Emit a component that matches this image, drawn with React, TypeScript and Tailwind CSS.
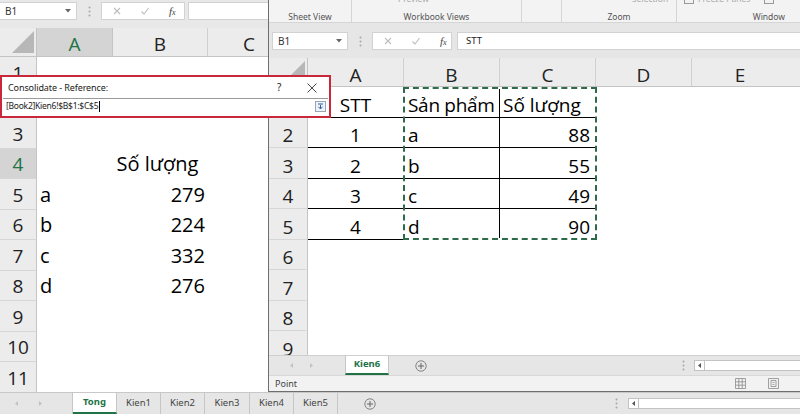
import React from "react";

function Dots() {
  return (
    <svg width="3" height="11" viewBox="0 0 3 11">
      <circle cx="1.5" cy="1.5" r="1" fill="#a8a8a8" />
      <circle cx="1.5" cy="5.5" r="1" fill="#a8a8a8" />
      <circle cx="1.5" cy="9.5" r="1" fill="#a8a8a8" />
    </svg>
  );
}

function DropTri() {
  return (
    <svg width="6" height="4" viewBox="0 0 6 4">
      <path d="M0 0 H6 L3 3.5 Z" fill="#666" />
    </svg>
  );
}

function NameBox({ className }: { className: string }) {
  return (
    <div
      className={`${className} h-[18px] bg-white border border-[#d2d2d2] flex items-center justify-between pl-[5px] pr-[5px] text-[10px] text-[#333] font-['Noto_Sans',sans-serif]`}
    >
      <span>B1</span>
      <DropTri />
    </div>
  );
}

function FxBox({ className }: { className: string }) {
  return (
    <div className={`${className} h-[18px] bg-white border border-[#d2d2d2] flex items-center pl-[11px] gap-[20px]`}>
      <svg width="8" height="8" viewBox="0 0 8 8">
        <path d="M1 1 L7 7 M7 1 L1 7" stroke="#bdbdbd" strokeWidth="1.1" />
      </svg>
      <svg width="8" height="8" viewBox="0 0 8 8">
        <path d="M0.5 4.5 L3 7 L7.5 1" stroke="#bdbdbd" strokeWidth="1.1" fill="none" />
      </svg>
      <span className="font-['Liberation_Serif',serif] italic text-[11px] leading-none text-[#444]">
        f<span className="text-[8px]">x</span>
      </span>
    </div>
  );
}

function CornerTri({ w }: { w: number }) {
  return (
    <svg width={w} height="28" viewBox={`0 0 ${w} 28`}>
      <path d={`M${w - 3} 3 L${w - 3} 25 L${w - 25} 25 Z`} fill="#b7b7b7" />
    </svg>
  );
}

function Arrows() {
  return (
    <>
      <svg width="3" height="5" viewBox="0 0 3 5">
        <path d="M3 0 V5 L0 2.5 Z" fill="#c2c2c2" />
      </svg>
      <svg width="3" height="5" viewBox="0 0 3 5">
        <path d="M0 0 V5 L3 2.5 Z" fill="#c2c2c2" />
      </svg>
    </>
  );
}

function PlusCircle() {
  return (
    <svg width="12" height="12" viewBox="0 0 12 12">
      <circle cx="6" cy="6" r="5.2" stroke="#777" strokeWidth="0.9" fill="none" />
      <path d="M6 3 V9 M3 6 H9" stroke="#666" strokeWidth="1" />
    </svg>
  );
}

function ScrollBox({ className }: { className: string }) {
  return (
    <div className={`${className} h-[11px] bg-white border border-[#c3c3c3] flex`}>
      <div className="w-[10px] h-full border-r border-[#c3c3c3] flex items-center justify-center">
        <svg width="3" height="5" viewBox="0 0 3 5">
          <path d="M3 0 V5 L0 2.5 Z" fill="#555" />
        </svg>
      </div>
    </div>
  );
}

const leftRows: { a?: string; b?: string; bCenter?: boolean }[] = [
  {},
  {},
  {},
  { b: "Số lượng", bCenter: true },
  { a: "a", b: "279" },
  { a: "b", b: "224" },
  { a: "c", b: "332" },
  { a: "d", b: "276" },
  {},
  {},
  {},
];

function LeftWindow() {
  return (
    <div className="w-[268px] h-[392px] shrink-0 flex flex-col overflow-hidden bg-white">
      <div className="h-[28px] shrink-0 bg-[#e8e8e8] pt-[2px]">
        <div className="flex items-center h-[18px]">
          <NameBox className="w-[77px] border-l-0" />
          <div className="w-[24px] flex justify-center">
            <Dots />
          </div>
          <FxBox className="w-[84px]" />
          <div className="ml-[3px] flex-1 h-[18px] bg-white border border-r-0 border-[#d2d2d2]" />
        </div>
      </div>
      <div className="h-[29px] shrink-0 flex bg-[#ececec] border-b border-[#c4c4c4] text-[19px] text-[#222]">
        <div className="w-[37px] border-r border-[#c4c4c4]">
          <CornerTri w={37} />
        </div>
        <div className="w-[76px] bg-[#d4d4d4] text-[#217346] border-r border-[#c4c4c4] flex items-center justify-center pt-[4px] leading-none">
          A
        </div>
        <div className="w-[95px] border-r border-[#d0d0d0] flex items-center justify-center pt-[4px] leading-none">
          B
        </div>
        <div className="flex-1 flex items-center justify-center pt-[4px] leading-none pl-[22px]">C</div>
      </div>
      {leftRows.map((r, i) => (
        <div key={i} className="h-[30.5px] shrink-0 flex">
          <div
            className={`w-[37px] border-r border-b border-r-[#c4c4c4] border-b-[#d6d6d6] flex items-end justify-center pb-[4px] text-[19px] leading-[20px] ${
              i === 3 ? "bg-[#d4d4d4] text-[#217346]" : "bg-[#ececec] text-[#222]"
            }`}
          >
            {i + 1}
          </div>
          <div className="w-[76px] flex items-end pl-[3px] pb-[5px] text-[20px] leading-[20px]">{r.a}</div>
          <div
            className={`w-[95px] flex items-end pb-[5px] text-[20px] leading-[20px] ${
              r.bCenter ? "justify-center pr-[6px]" : "justify-end pr-[3px]"
            }`}
          >
            {r.b}
          </div>
          <div className="flex-1" />
        </div>
      ))}
    </div>
  );
}

const rightRows: { a?: string; b?: string; c?: string; head?: boolean }[] = [
  { a: "STT", b: "Sản phẩm", c: "Số lượng", head: true },
  { a: "1", b: "a", c: "88" },
  { a: "2", b: "b", c: "55" },
  { a: "3", b: "c", c: "49" },
  { a: "4", b: "d", c: "90" },
  {},
  {},
  {},
  {},
];

function RightWindow() {
  return (
    <div className="flex-1 h-[392px] flex flex-col border-l border-b border-[#6e6e6e] bg-white overflow-hidden">
      {/* ribbon */}
      <div className="h-[23px] shrink-0 flex bg-[#f3f3f3] border-b border-[#d6d6d6] text-[8.5px] leading-[10px] text-[#555] font-['Noto_Sans',sans-serif]">
        <div className="w-[83px] shrink-0 flex flex-col justify-end items-center border-r border-[#d6d6d6]">
          Sheet View
        </div>
        <div className="w-[170px] shrink-0 flex flex-col justify-between border-r border-[#d6d6d6]">
          <div className="h-[4px] overflow-hidden pl-[46px]">
            <div className="-mt-[7px] text-[#aaa] leading-[11px]">Preview</div>
          </div>
          <div className="text-center">Workbook Views</div>
        </div>
        <div className="w-[40px] shrink-0 border-r border-[#d6d6d6]" />
        <div className="w-[115px] shrink-0 flex flex-col justify-between border-r border-[#d6d6d6]">
          <div className="h-[4px] overflow-hidden pl-[70px]">
            <div className="-mt-[7px] text-[#aaa] leading-[11px]">Selection</div>
          </div>
          <div className="text-center">Zoom</div>
        </div>
        <div className="flex-1 flex flex-col justify-between">
          <div className="h-[4px] overflow-hidden pl-[7px] flex items-start gap-[4px]">
            <div className="w-[10px] h-[7px] -mt-[3px] border border-[#999] shrink-0" />
            <div className="-mt-[7px] text-[#aaa] leading-[11px] w-[62px] shrink-0">Freeze Panes</div>
            <div className="w-[10px] h-[7px] -mt-[3px] border border-[#999] shrink-0" />
          </div>
          <div className="text-right pr-[15px]">Window</div>
        </div>
      </div>
      {/* formula bar */}
      <div className="h-[35px] shrink-0 bg-[#e6e6e6] pt-[9px] pl-[3px]">
        <div className="flex items-center h-[18px]">
          <NameBox className="w-[76px]" />
          <div className="w-[24px] flex justify-center">
            <Dots />
          </div>
          <FxBox className="w-[80px]" />
          <div className="ml-[5px] flex-1 h-[18px] bg-white border border-r-0 border-[#d2d2d2] flex items-center pl-[8px] text-[9.5px] text-[#222] font-['Noto_Sans',sans-serif]">
            STT
          </div>
        </div>
      </div>
      {/* column headers */}
      <div className="h-[29px] shrink-0 flex bg-[#ececec] border-b border-[#c4c4c4] text-[19px] text-[#222] leading-none">
        <div className="w-[39px] border-r border-[#c4c4c4]">
          <CornerTri w={39} />
        </div>
        <div className="w-[96px] border-r border-[#d0d0d0] flex items-center justify-center pt-[6px]">A</div>
        <div className="w-[96px] border-r border-[#d0d0d0] flex items-center justify-center pt-[6px]">B</div>
        <div className="w-[96px] border-r border-[#d0d0d0] flex items-center justify-center pt-[6px]">C</div>
        <div className="w-[96px] border-r border-[#d0d0d0] flex items-center justify-center pt-[6px]">D</div>
        <div className="flex-1 flex items-center justify-center pt-[6px] pr-[12px]">E</div>
      </div>
      {/* rows */}
      <div className="h-[268px] shrink-0 relative overflow-hidden">
        {rightRows.map((r, i) => {
          const framed = i < 5;
          return (
            <div key={i} className="h-[30.5px] flex">
              <div className="w-[39px] shrink-0 bg-[#ececec] border-r border-b border-r-[#c4c4c4] border-b-[#d6d6d6] flex items-end justify-center pb-[2px] text-[19px] leading-[20px] text-[#222]">
                {i + 1}
              </div>
              <div
                className={`w-[96px] shrink-0 flex items-end justify-center pb-[2px] text-[19px] leading-[20px] ${
                  framed ? "border-r border-b border-black" : ""
                }`}
              >
                {r.a}
              </div>
              <div
                className={`w-[96px] shrink-0 flex items-end pl-[4px] pb-[2px] text-[19px] leading-[20px] whitespace-nowrap tracking-[-0.3px] ${
                  framed ? "border-r border-b border-black" : ""
                }`}
              >
                {r.b}
              </div>
              <div
                className={`w-[96px] shrink-0 flex items-end pb-[2px] text-[19px] leading-[20px] whitespace-nowrap ${
                  r.head ? "justify-start pl-[3px]" : "justify-end pr-[5px]"
                } ${framed ? "border-r border-b border-black" : ""}`}
              >
                {r.c}
              </div>
              <div className="flex-1" />
            </div>
          );
        })}
        {/* copy marquee over B1:C5 */}
        <div className="absolute left-[134px] top-0 w-[194px] h-[153px] border-2 border-white" />
        <div className="absolute left-[134px] top-0 w-[194px] h-[153px] border-2 border-dashed border-[#2e6b4a]" />
      </div>
      {/* sheet tabs */}
      <div className="h-[20px] shrink-0 flex bg-[#e6e6e6] border-t border-[#cfcfcf] text-[9.5px] font-['Noto_Sans',sans-serif]">
        <div className="w-[76px] shrink-0 flex items-center pl-[21px] gap-[17px]">
          <Arrows />
        </div>
        <div className="w-[44px] shrink-0 bg-white border-x border-[#c6c6c6] border-b-2 border-b-[#217346] flex items-center justify-center font-bold text-[#217346]">
          Kien6
        </div>
        <div className="w-[64px] shrink-0 flex items-center justify-center">
          <PlusCircle />
        </div>
        <div className="flex-1" />
        <div className="w-[12px] flex items-center">
          <Dots />
        </div>
        <div className="w-[106px] flex items-center">
          <ScrollBox className="w-[106px] border-r-0" />
        </div>
      </div>
      {/* status bar */}
      <div className="h-[16px] shrink-0 flex items-center justify-between bg-[#f2f2f2] border-t border-[#d8d8d8] pl-[6px] pr-[21px] text-[9px] text-[#444] font-['Noto_Sans',sans-serif]">
        <span>Point</span>
        <div className="flex items-center gap-[22px]">
          <svg width="11" height="11" viewBox="0 0 11 11">
            <path
              d="M0.5 0.5 H10.5 V10.5 H0.5 Z M0.5 3.8 H10.5 M0.5 7.2 H10.5 M3.8 0.5 V10.5 M7.2 0.5 V10.5"
              stroke="#8a8a8a"
              strokeWidth="0.8"
              fill="none"
            />
          </svg>
          <svg width="11" height="11" viewBox="0 0 11 11">
            <path d="M0.5 0.5 H10.5 V10.5 H0.5 Z" stroke="#8a8a8a" strokeWidth="0.8" fill="none" />
            <path d="M3 2.5 H8 V8.5 H3 Z" stroke="#8a8a8a" strokeWidth="0.8" fill="none" />
            <path d="M4.5 4.5 H6.5 M4.5 6.5 H6.5" stroke="#8a8a8a" strokeWidth="0.7" />
          </svg>
        </div>
      </div>
    </div>
  );
}

function LeftTabBar() {
  const tabs = [
    { n: "Kien1", w: "w-[44px]" },
    { n: "Kien2", w: "w-[44px]" },
    { n: "Kien3", w: "w-[45px]" },
    { n: "Kien4", w: "w-[44px]" },
    { n: "Kien5", w: "w-[44px]" },
  ];
  return (
    <div className="h-[22px] flex bg-[#e6e6e6] border-t border-[#c8c8c8] text-[9.5px] text-[#444] font-['Noto_Sans',sans-serif]">
      <div className="w-[73px] shrink-0 flex items-center pl-[15px] gap-[21px] border-r border-[#c6c6c6]">
        <Arrows />
      </div>
      <div className="w-[44px] shrink-0 bg-white border-r border-[#c6c6c6] border-b-2 border-b-[#217346] flex items-center justify-center font-bold text-[#217346]">
        Tong
      </div>
      {tabs.map((t) => (
        <div key={t.n} className={`${t.w} shrink-0 border-r border-[#c6c6c6] flex items-center justify-center`}>
          {t.n}
        </div>
      ))}
      <div className="w-[64px] shrink-0 flex items-center justify-center">
        <PlusCircle />
      </div>
      <div className="flex-1" />
      <div className="w-[13px] flex items-center">
        <Dots />
      </div>
      <div className="w-[172px] flex items-center">
        <ScrollBox className="w-[172px] border-r-0" />
      </div>
    </div>
  );
}

function Dialog() {
  return (
    <div className="absolute left-0 top-[75px] w-[331px] h-[43px] bg-white border-2 border-[#c8283a] flex flex-col font-['Noto_Sans',sans-serif] text-[#222]">
      <div className="h-[21px] flex items-center pl-[6px] text-[9px] tracking-[-0.1px]">
        <span>Consolidate - Reference:</span>
        <div className="flex-1" />
        <span className="w-[30px] text-[10px]">?</span>
        <svg width="10" height="10" viewBox="0 0 10 10" className="mr-[12px]">
          <path d="M0.5 0.5 L9.5 9.5 M9.5 0.5 L0.5 9.5" stroke="#333" strokeWidth="0.9" />
        </svg>
      </div>
      <div className="mx-[1px] h-[16px] border-t border-[#9a9a9a] flex items-center pl-[3px] pr-[2px] text-[8.5px] tracking-[-0.25px]">
        <span>[Book2]Kien6!$B$1:$C$5</span>
        <span className="w-px h-[11px] bg-black ml-[1px]" />
        <div className="flex-1" />
        <svg width="11" height="11" viewBox="0 0 11 11">
          <rect x="0.5" y="0.5" width="10" height="10" fill="#eef3f9" stroke="#9aa6b5" />
          <path d="M3 3 H8" stroke="#2b5ea8" strokeWidth="1" />
          <path d="M5.5 4 V7.5 M3.5 5.8 L5.5 8 L7.5 5.8" stroke="#2b5ea8" strokeWidth="1" fill="none" />
        </svg>
      </div>
    </div>
  );
}

export default function App() {
  return (
    <div className="relative w-[800px] h-[414px] overflow-hidden bg-white font-['Open_Sans',sans-serif] text-black">
      <div className="flex h-[392px]">
        <LeftWindow />
        <RightWindow />
      </div>
      <LeftTabBar />
      <Dialog />
    </div>
  );
}
